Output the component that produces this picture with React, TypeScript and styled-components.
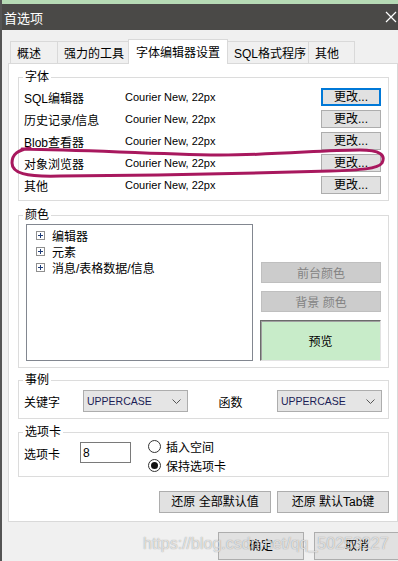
import React from 'react';
import styled, { createGlobalStyle } from 'styled-components';

const GlobalStyle = createGlobalStyle`
  html, body {
    margin: 0;
    padding: 0;
  }
  body {
    width: 398px;
    height: 561px;
    overflow: hidden;
    background: #f0f0f0;
    font-family: "Liberation Sans", "Noto Sans CJK SC", sans-serif;
    font-size: 12px;
    color: #000;
  }
  * {
    box-sizing: border-box;
  }
`;

const Window = styled.div`
  position: relative;
  width: 398px;
  height: 561px;
  display: flex;
  flex-direction: column;
  border-left: 2px solid #545454;
  overflow: hidden;
`;

const TopStrip = styled.div`
  height: 4px;
  background: #b6dab5;
`;

const TitleBar = styled.div`
  height: 26px;
  background: #4a4947;
  color: #fff;
  font-size: 13px;
  display: flex;
  align-items: center;
  justify-content: space-between;
  padding: 0 1px 0 2px;
`;

const Body = styled.div`
  flex: 1;
  padding: 9px 0 0 6px;
`;

const TabStrip = styled.div`
  display: flex;
  align-items: flex-end;
  height: 24px;
  padding-left: 2px;
`;

const Tab = styled.div<{ $w: number; $active?: boolean }>`
  position: relative;
  width: ${(p) => p.$w}px;
  height: ${(p) => (p.$active ? 25 : 22)}px;
  margin-left: -1px;
  margin-bottom: ${(p) => (p.$active ? -1 : 0)}px;
  z-index: ${(p) => (p.$active ? 2 : 1)};
  padding: ${(p) => (p.$active ? '0 0 2px 7px' : '0 0 0 6px')};
  display: flex;
  align-items: center;
  white-space: nowrap;
  background: ${(p) => (p.$active ? '#fff' : '#f0f0f0')};
  border: 1px solid #d9d9d9;
  border-bottom: none;
  &:first-child {
    margin-left: 0;
  }
`;

const Panel = styled.div`
  width: 390px;
  background: #fff;
  border: 1px solid #d9d9d9;
  padding: 5px 8px 8px 9px;
`;

const Group = styled.fieldset<{ $mt?: number }>`
  margin: ${(p) => p.$mt ?? 0}px 0 0 0;
  padding: 0 7px 6px 5px;
  border: 1px solid #dcdcdc;
  min-width: 0;
`;

const Legend = styled.legend`
  padding: 0 2px;
  margin-left: -1px;
  line-height: 16px;
  font-size: 12px;
`;

const FontRow = styled.div`
  display: grid;
  grid-template-columns: 101px 1fr 60px;
  align-items: center;
  height: 18px;
  margin-top: 4px;
  &:first-of-type {
    margin-top: 3px;
  }
`;

const FontName = styled.span`
  font-size: 11px;
`;

const WinButton = styled.button<{ $focused?: boolean; $w?: number; $h?: number }>`
  width: ${(p) => p.$w ?? 60}px;
  height: ${(p) => p.$h ?? 18}px;
  padding: 0;
  margin: 0;
  background: #e1e1e1;
  border: 1px solid ${(p) => (p.$focused ? '#0078d7' : '#adadad')};
  box-shadow: ${(p) => (p.$focused ? 'inset 0 0 0 1px #0078d7' : 'none')};
  font-family: "Liberation Sans", "Noto Sans CJK SC", sans-serif;
  font-size: 12px;
  color: #000;
  line-height: 1;
`;

const DisabledButton = styled.div`
  width: 120px;
  height: 21px;
  margin-left: 1px;
  background: #cccccc;
  border: 1px solid #bfbfbf;
  color: #838383;
  display: flex;
  align-items: center;
  justify-content: center;
`;

const ColorArea = styled.div`
  display: flex;
  gap: 7px;
  margin-top: 1px;
`;

const Tree = styled.div`
  width: 227px;
  height: 137px;
  margin-left: 2px;
  border: 1px solid #828790;
  padding: 2px 0 0 9px;
`;

const TreeItem = styled.div`
  display: flex;
  align-items: center;
  gap: 7px;
  height: 16px;
`;

const SideColumn = styled.div`
  width: 121px;
  display: flex;
  flex-direction: column;
  justify-content: flex-end;
  gap: 8px;
`;

const Preview = styled.div`
  height: 41px;
  background: #c8ecc9;
  border: 1px solid;
  border-color: #6b6b6b #e3e3e3 #e3e3e3 #6b6b6b;
  box-shadow: inset 1px 1px 0 #a0a0a0;
  display: flex;
  align-items: center;
  justify-content: center;
`;

const CaseRow = styled.div`
  display: grid;
  grid-template-columns: 59px 105px 89px 105px;
  align-items: center;
  margin-top: 2px;
`;

const CaseLabel = styled.span<{ $center?: boolean }>`
  text-align: ${(p) => (p.$center ? 'center' : 'left')};
  padding-right: ${(p) => (p.$center ? 4 : 0)}px;
`;

const Select = styled.div`
  height: 22px;
  background: #e5e5e5;
  border: 1px solid #adadad;
  display: flex;
  align-items: center;
  justify-content: space-between;
  padding: 0 6px 0 3px;
  font-size: 10.5px;
  color: #1c1c55;
`;

const TabRow = styled.div`
  display: flex;
  align-items: flex-start;
  height: 30px;
`;

const TabLabel = styled.span`
  width: 56px;
  margin-top: 5px;
`;

const NumInput = styled.div`
  width: 51px;
  height: 21px;
  margin-top: 2px;
  border: 1px solid #7a7a7a;
  padding-left: 2px;
  display: flex;
  align-items: center;
`;

const RadioColumn = styled.div`
  margin: -3px 0 0 17px;
  display: flex;
  flex-direction: column;
`;

const RadioRow = styled.div`
  display: flex;
  align-items: center;
  gap: 5px;
  height: 19px;
`;

const RadioDot = styled.span<{ $checked?: boolean }>`
  width: 13px;
  height: 13px;
  border-radius: 50%;
  border: 1px solid #333;
  background: #fff;
  display: flex;
  align-items: center;
  justify-content: center;
  &::after {
    content: '';
    width: 7px;
    height: 7px;
    border-radius: 50%;
    background: ${(p) => (p.$checked ? '#111' : 'transparent')};
  }
`;

const ActionRow = styled.div`
  display: flex;
  justify-content: flex-end;
  gap: 6px;
  margin-top: 14px;
`;

const FooterRow = styled.div`
  display: flex;
  justify-content: flex-end;
  gap: 10px;
  margin: 10px -2px 0 0;
`;

const Watermark = styled.div`
  position: absolute;
  left: 141px;
  top: 535px;
  font-size: 16px;
  color: rgba(255, 255, 255, 0.7);
  text-shadow: 0 0 1px rgba(90, 90, 90, 0.7);
  pointer-events: none;
  white-space: nowrap;
`;

const Annotation = styled.svg`
  position: absolute;
  left: -2px;
  top: 0;
  pointer-events: none;
`;

const PlusBox = () => (
  <svg width="9" height="9" viewBox="0 0 9 9">
    <rect x="0.5" y="0.5" width="8" height="8" fill="#fff" stroke="#8f8f8f" />
    <path d="M2 4.5h5M4.5 2v5" stroke="#1d3b78" strokeWidth="1" />
  </svg>
);

const Chevron = () => (
  <svg width="9" height="5" viewBox="0 0 9 5">
    <path d="M0.5 0.5L4.5 4.5L8.5 0.5" fill="none" stroke="#555" strokeWidth="1" />
  </svg>
);

const fontRows = ['SQL编辑器', '历史记录/信息', 'Blob查看器', '对象浏览器', '其他'];

const App = () => {
  return (
    <>
      <GlobalStyle />
      <Window>
        <TopStrip />
        <TitleBar>
          <span>首选项</span>
          <svg width="12" height="12" viewBox="0 0 12 12">
            <path d="M1 1L11 11M11 1L1 11" stroke="#fff" strokeWidth="1.2" />
          </svg>
        </TitleBar>
        <Body>
          <TabStrip>
            <Tab $w={48}>概述</Tab>
            <Tab $w={72}>强力的工具</Tab>
            <Tab $w={100} $active>
              字体编辑器设置
            </Tab>
            <Tab $w={82}>SQL格式程序</Tab>
            <Tab $w={47}>其他</Tab>
          </TabStrip>
          <Panel>
            <Group>
              <Legend>字体</Legend>
              {fontRows.map((name, i) => (
                <FontRow key={name}>
                  <span>{name}</span>
                  <FontName>Courier New, 22px</FontName>
                  <WinButton $focused={i === 0}>更改...</WinButton>
                </FontRow>
              ))}
            </Group>

            <Group $mt={6}>
              <Legend>颜色</Legend>
              <ColorArea>
                <Tree>
                  <TreeItem>
                    <PlusBox />
                    编辑器
                  </TreeItem>
                  <TreeItem>
                    <PlusBox />
                    元素
                  </TreeItem>
                  <TreeItem>
                    <PlusBox />
                    消息/表格数据/信息
                  </TreeItem>
                </Tree>
                <SideColumn>
                  <DisabledButton>前台颜色</DisabledButton>
                  <DisabledButton>背景 颜色</DisabledButton>
                  <Preview>预览</Preview>
                </SideColumn>
              </ColorArea>
            </Group>

            <Group $mt={4}>
              <Legend>事例</Legend>
              <CaseRow>
                <CaseLabel>关键字</CaseLabel>
                <Select>
                  UPPERCASE
                  <Chevron />
                </Select>
                <CaseLabel $center>函数</CaseLabel>
                <Select>
                  UPPERCASE
                  <Chevron />
                </Select>
              </CaseRow>
            </Group>

            <Group $mt={5}>
              <Legend>选项卡</Legend>
              <TabRow>
                <TabLabel>选项卡</TabLabel>
                <NumInput>8</NumInput>
                <RadioColumn>
                  <RadioRow>
                    <RadioDot />
                    插入空间
                  </RadioRow>
                  <RadioRow>
                    <RadioDot $checked />
                    保持选项卡
                  </RadioRow>
                </RadioColumn>
              </TabRow>
            </Group>

            <ActionRow>
              <WinButton $w={112} $h={22}>
                还原 全部默认值
              </WinButton>
              <WinButton $w={112} $h={22}>
                还原 默认Tab键
              </WinButton>
            </ActionRow>
          </Panel>
          <FooterRow>
            <WinButton $w={86} $h={28}>
              确定
            </WinButton>
            <WinButton $w={86} $h={28}>
              取消
            </WinButton>
          </FooterRow>
        </Body>
        <Watermark>https://blog.csdn.net/qq_50253227</Watermark>
        <Annotation width="398" height="561" viewBox="0 0 398 561">
          <path
            d="M 22 149 C 90 150, 150 154, 220 155 C 280 155, 320 150, 360 150 C 380 150, 386 155, 382 163 C 378 169, 360 170, 330 171 C 260 173, 180 175, 60 176 C 25 177, 12 173, 12 163 C 12 154, 18 150, 30 148"
            fill="none"
            stroke="#a8185e"
            strokeWidth="3"
            strokeLinecap="round"
          />
        </Annotation>
      </Window>
    </>
  );
};

export default App;
